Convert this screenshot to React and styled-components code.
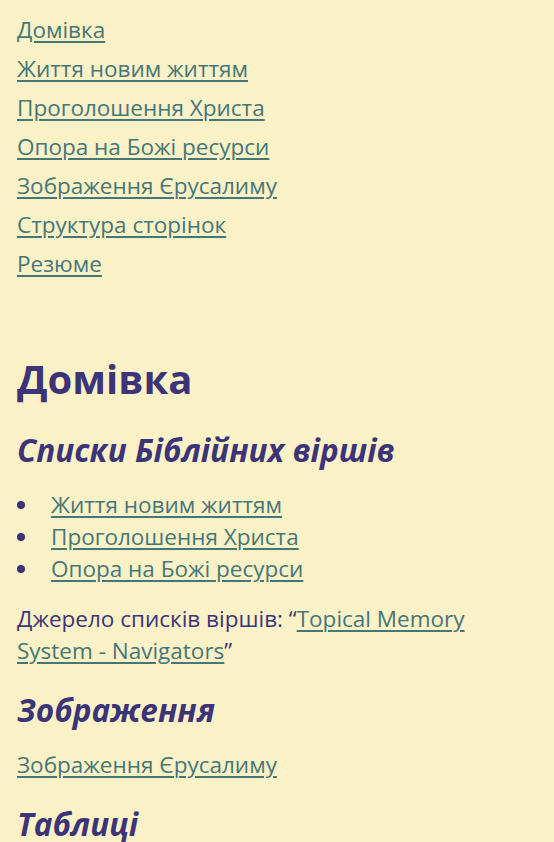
import styled, { createGlobalStyle } from "styled-components";

const GlobalStyle = createGlobalStyle`
  html, body {
    margin: 0;
    padding: 0;
    background-color: #fbf1c7;
  }
  body {
    font-family: "Open Sans", "Noto Sans", sans-serif;
    color: #3c3478;
  }
`;

const Page = styled.div`
  padding: 14px 17px 0 17px;
  font-size: 22.5px;
  line-height: 32px;
`;

const Nav = styled.nav`
  display: flex;
  flex-direction: column;
  gap: 7px;
  margin-bottom: 75px;
`;

const A = styled.a`
  color: #457777;
  text-decoration: underline;
  text-decoration-thickness: 2px;
  text-underline-offset: 3px;
`;

const Title = styled.h1`
  font-size: 40px;
  font-weight: 700;
  line-height: 48px;
  margin: 0 0 28px 0;
`;

const SubTitle = styled.h2`
  font-size: 31.5px;
  font-style: italic;
  font-weight: 700;
  line-height: 38px;
  margin: 0 0 20px 0;
`;

const List = styled.ul`
  list-style: none;
  margin: 0 0 18px 0;
  padding: 0;
`;

const Item = styled.li`
  display: flex;
  align-items: center;
  &::before {
    content: "";
    width: 8px;
    height: 8px;
    border-radius: 50%;
    background: #3c3478;
    margin: 0 26px 0 0;
    flex-shrink: 0;
  }
`;

const Text = styled.p`
  margin: 0 0 24px 0;
`;

const links = [
  "Домівка",
  "Життя новим життям",
  "Проголошення Христа",
  "Опора на Божі ресурси",
  "Зображення Єрусалиму",
  "Структура сторінок",
  "Резюме",
];

export default function App() {
  return (
    <>
      <GlobalStyle />
      <Page>
        <Nav>
          {links.map((l) => (
            <div key={l}>
              <A href="#">{l}</A>
            </div>
          ))}
        </Nav>
        <Title>Домівка</Title>
        <SubTitle>Списки Біблійних віршів</SubTitle>
        <List>
          <Item><A href="#">Життя новим життям</A></Item>
          <Item><A href="#">Проголошення Христа</A></Item>
          <Item><A href="#">Опора на Божі ресурси</A></Item>
        </List>
        <Text>
          Джерело списків віршів: “<A href="#">Topical Memory System - Navigators</A>”
        </Text>
        <SubTitle>Зображення</SubTitle>
        <Text>
          <A href="#">Зображення Єрусалиму</A>
        </Text>
        <SubTitle>Таблиці</SubTitle>
      </Page>
    </>
  );
}
